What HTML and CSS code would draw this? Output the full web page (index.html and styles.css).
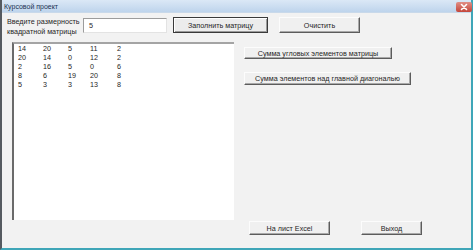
FILE: index.html
```html
<!DOCTYPE html>
<html lang="ru">
<head>
<meta charset="utf-8">
<title>Курсовой проект</title>
<link rel="stylesheet" href="styles.css">
</head>
<body>
<div class="window">
  <div class="titlebar">
    <span class="title">Курсовой проект</span>
    <span class="close"><svg width="16" height="10" viewBox="0 0 16 10"><path d="M5.5 2.5 L10.5 7.5 M10.5 2.5 L5.5 7.5" stroke="#fff" stroke-width="1.6" stroke-linecap="round"/></svg></span>
  </div>
  <div class="client">
    <div class="toprow">
      <div class="label">Введите размерность<br>квадратной матрицы</div>
      <div class="input">5</div>
      <div class="btn btn-default btn-fill">Заполнить матрицу</div>
      <div class="btn btn-clear">Очистить</div>
    </div>
    <div class="main">
      <div class="listbox">
        <div class="row"><span>14</span><span>20</span><span>5</span><span>11</span><span>2</span></div>
        <div class="row"><span>20</span><span>14</span><span>0</span><span>12</span><span>2</span></div>
        <div class="row"><span>2</span><span>16</span><span>5</span><span>0</span><span>6</span></div>
        <div class="row"><span>8</span><span>6</span><span>19</span><span>20</span><span>8</span></div>
        <div class="row"><span>5</span><span>3</span><span>3</span><span>13</span><span>8</span></div>
      </div>
      <div class="side">
        <div class="btn btn-corner">Сумма угловых элементов матрицы</div>
        <div class="btn btn-diag">Сумма элементов над главной диагональю</div>
        <div class="bottom">
          <div class="btn btn-excel">На лист Excel</div>
          <div class="btn btn-exit">Выход</div>
        </div>
      </div>
    </div>
  </div>
</div>
</body>
</html>
```
FILE: styles.css
```css
* { box-sizing: border-box; }
html, body { margin: 0; padding: 0; background: #f0f0f0; }
body {
  font-family: "Liberation Sans", Arial, sans-serif;
  font-size: 7.2px;
  color: #262626;
}
.window {
  width: 473px;
  height: 250px;
  display: flex;
  flex-direction: column;
  border-left: 2px solid #555a60;
  border-right: 2px solid #3fa6b8;
  border-bottom: 2px solid #3fa6b8;
  background: #f0f0f0;
}
.titlebar {
  height: 13px;
  display: flex;
  align-items: center;
  padding-left: 2px;
  background: linear-gradient(#dbe8f6, #bed4ec);
  border-bottom: 1px solid #c9d9ea;
}
.title {
  font-size: 7px;
  color: #1c3353;
}
.close {
  margin-left: auto;
  margin-right: -1px;
  width: 16px;
  height: 10px;
  margin-top: 1px;
  border-radius: 2px;
  background: linear-gradient(#e08f86, #c4463b);
  display: flex;
}
.client {
  flex: 1;
  display: flex;
  flex-direction: column;
  background: #f2f2f2;
}
.toprow {
  height: 29px;
  display: flex;
  align-items: flex-start;
  padding: 4px 0 0 5px;
}
.label {
  width: 76px;
  line-height: 10px;
}
.input {
  margin-top: 1px;
  width: 84px;
  height: 15px;
  background: #fff;
  border: 1px solid #9c9c9c;
  border-right-color: #e3e3e3;
  border-bottom-color: #e3e3e3;
  padding: 2px 0 0 5px;
  line-height: 10px;
}
.btn {
  display: flex;
  align-items: center;
  justify-content: center;
  background: #f0f0f0;
  border-top: 1px solid #fcfcfc;
  border-left: 1px solid #fcfcfc;
  border-right: 1px solid #5c5c5c;
  border-bottom: 1px solid #5c5c5c;
  box-shadow: inset -1px -1px 0 #a9a9a9;
  white-space: nowrap;
}
.btn-default {
  border: 1px solid #3a3a3a;
  box-shadow: inset 1px 1px 0 #fff, inset -1px -1px 0 #9a9a9a;
  background: #ececec;
}
.btn-fill { width: 95px; height: 16px; margin-left: 6px; }
.btn-clear { width: 81px; height: 16px; margin-left: 11px; }
.main {
  flex: 1;
  display: flex;
  padding: 0 0 13px 10px;
}
.listbox {
  width: 222px;
  height: 178px;
  background: #fff;
  border-top: 2px solid #a4a4a4;
  border-left: 2px solid #6a6a6a;
  padding: 0 0 0 4px;
}
.row {
  display: grid;
  grid-template-columns: 25px 25px 22px 27px 20px;
  height: 9px;
  line-height: 9px;
}
.side {
  flex: 1;
  display: flex;
  flex-direction: column;
  align-items: flex-start;
  padding-left: 10px;
}
.btn-corner { width: 148px; height: 12px; margin-top: 5px; }
.btn-diag { width: 167px; height: 13px; margin-top: 13px; }
.bottom {
  margin-top: auto;
  display: flex;
  gap: 31px;
  padding-left: 5px;
}
.btn-excel { width: 81px; height: 14px; }
.btn-exit { width: 61px; height: 14px; }
```
